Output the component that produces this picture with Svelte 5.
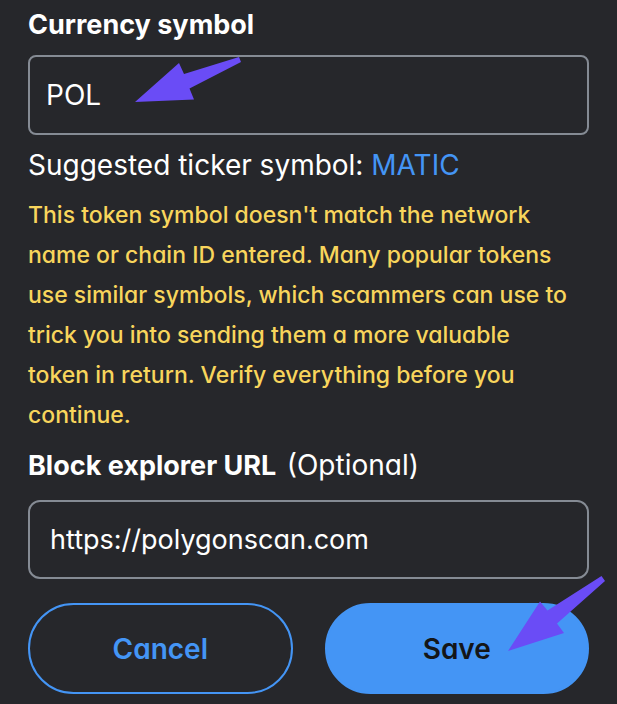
<script>
  let symbol = $state('POL');
  let explorerUrl = $state('https://polygonscan.com');
</script>

<form class="network-form" onsubmit={(event) => event.preventDefault()}>
  <label class="label" for="symbol">Currency symbol</label>
  <div class="field">
    <input id="symbol" type="text" bind:value={symbol} />
    <svg class="arrow arrow-symbol" viewBox="0 0 106 45" width="106" height="45" aria-hidden="true">
      <path d="M0 45 44 6 49 17 104 0 106 5 54.500 31.500 59 42.500Z" />
    </svg>
  </div>

  <p class="suggestion">Suggested ticker symbol: <a href="#symbol">MATIC</a></p>
  <p class="warning">
    This token symbol doesn't match the network name or chain ID entered. Many popular tokens
    use similar symbols, which scammers can use to trick you into sending them a more valuable
    token in return. Verify everything before you continue.
  </p>

  <label class="label" for="explorer">Block explorer URL <span>(Optional)</span></label>
  <div class="field url-field">
    <input id="explorer" class="url" type="text" bind:value={explorerUrl} />
  </div>

  <div class="actions">
    <button class="cancel" type="button">Cancel</button>
    <div class="save-wrap">
      <button class="save" type="submit">Save</button>
      <svg class="arrow arrow-save" viewBox="0 0 97 75" width="97" height="75" aria-hidden="true">
        <path d="M0 75 32 25.500 39.500 34.500 93.500 0 97 5 49 47.500 56 57Z" />
      </svg>
    </div>
  </div>
</form>

<style>
  :global(body) {
    margin: 0;
    background: #26272b;
  }

  .network-form {
    display: flex;
    flex-direction: column;
    padding: 5px 28px 11px;
    color: #fff;
    font-family: Inter, 'Liberation Sans', sans-serif;
    font-feature-settings: 'cv11';
    font-size: 28px;
    line-height: 40px;
  }

  .label {
    margin-bottom: 10px;
    font-size: 27px;
    font-weight: 700;
  }

  .label span {
    margin-left: 4px;
    font-size: 28px;
    font-weight: 400;
  }

  .field {
    position: relative;
    display: flex;
  }

  .url-field {
    margin-top: 4px;
  }

  input {
    box-sizing: border-box;
    width: 100%;
    height: 80px;
    padding: 0 16px;
    border: 2px solid #858b94;
    border-radius: 8px;
    outline: none;
    background: transparent;
    color: inherit;
    font: inherit;
    font-feature-settings: inherit;
  }

  .url {
    height: 79px;
    padding: 0 20px;
    border-radius: 12px;
    font-size: 27px;
  }

  p {
    margin: 0;
  }

  .suggestion {
    margin: 10px 0;
  }

  a {
    color: #4495f5;
    text-decoration: none;
  }

  .warning {
    margin-bottom: 10px;
    padding-right: 16px;
    color: #f8d55c;
    font-size: 23px;
    font-weight: 500;
  }

  .actions {
    display: grid;
    grid-template-columns: 1fr 1fr;
    gap: 32px;
    margin-top: 24px;
  }

  .save-wrap {
    position: relative;
    display: flex;
  }

  button {
    box-sizing: border-box;
    width: 100%;
    height: 91px;
    padding: 0 24px;
    border: 2px solid #4495f5;
    border-radius: 46px;
    background: transparent;
    color: #4495f5;
    font: inherit;
    font-feature-settings: inherit;
    font-weight: 600;
    cursor: pointer;
  }

  .save {
    background: #4495f5;
    color: #141618;
  }

  .arrow {
    position: absolute;
    fill: #6a4cf6;
    pointer-events: none;
  }

  .arrow-symbol {
    top: 2px;
    left: 107px;
  }

  .arrow-save {
    top: -27px;
    right: -16px;
  }
</style>
